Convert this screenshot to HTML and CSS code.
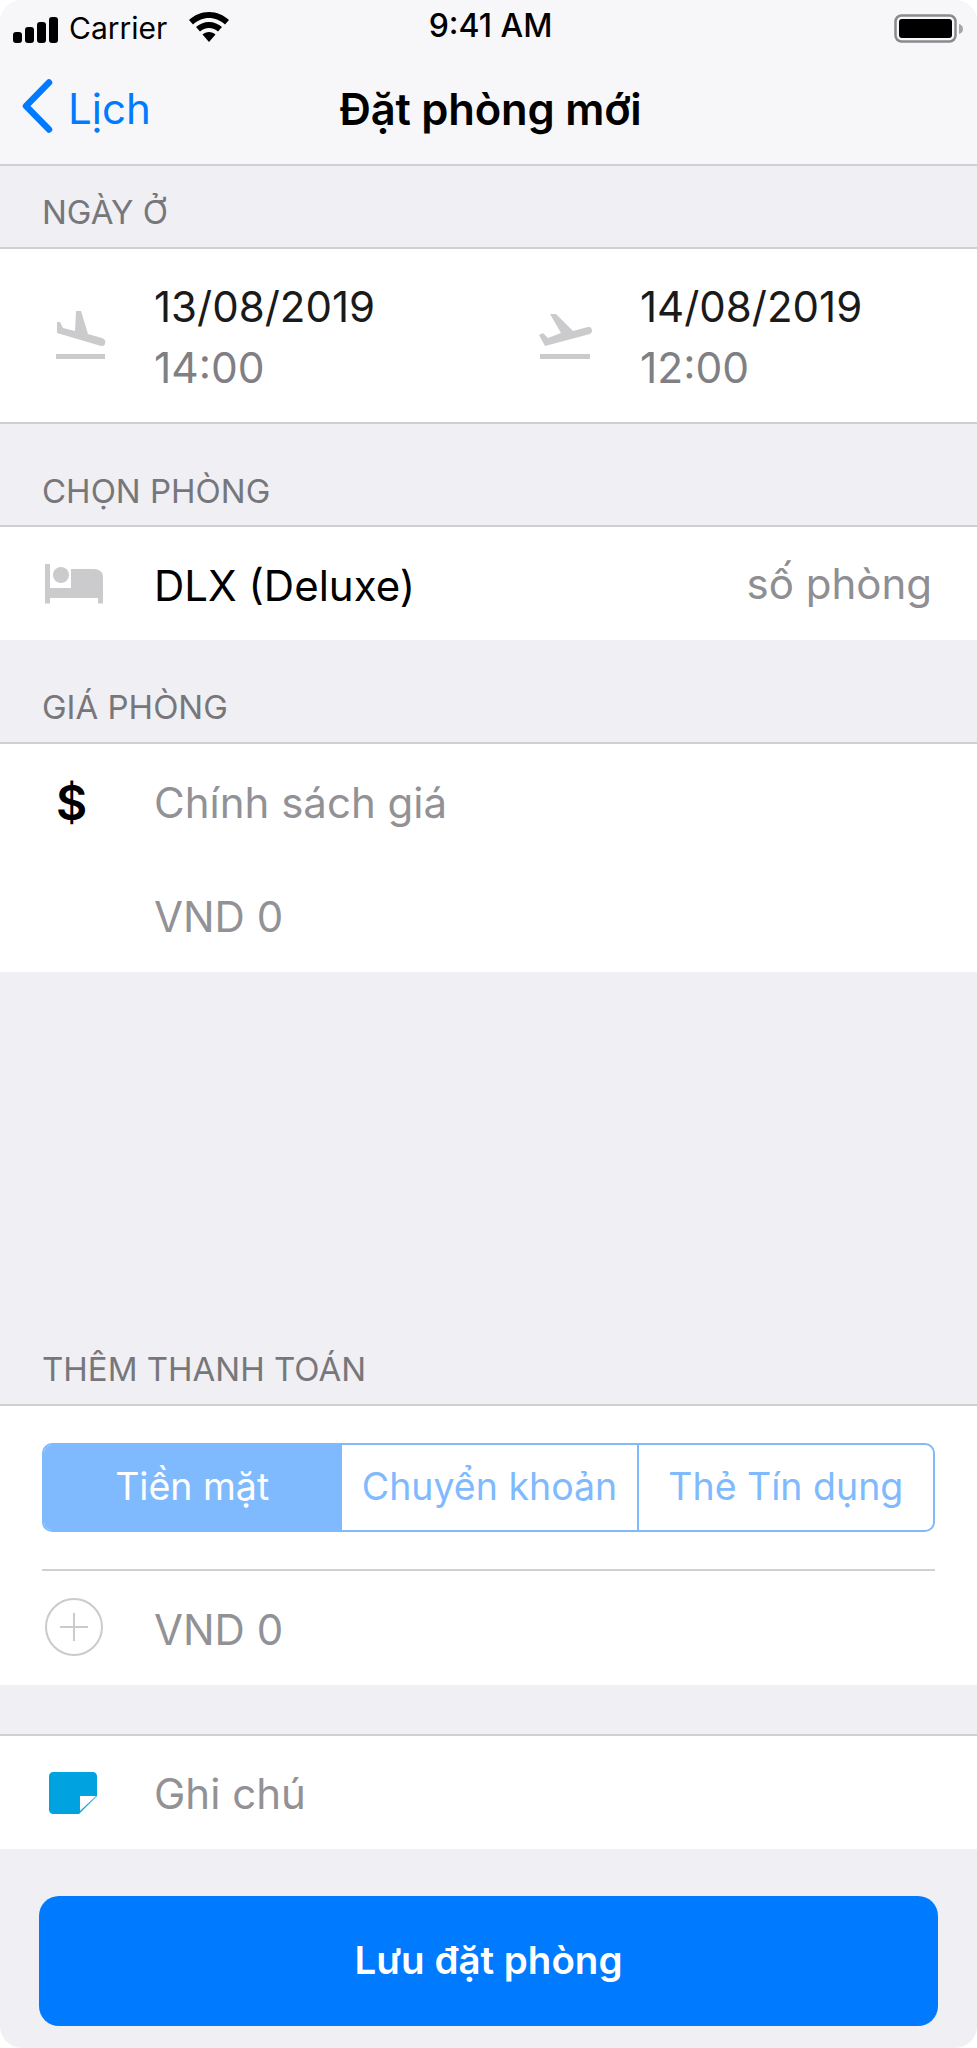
FILE: index.html
```html
<!DOCTYPE html>
<html lang="vi">
<head>
    <meta charset="UTF-8">
    <title>Đặt phòng mới</title>
    <link rel="stylesheet" href="styles.css">
</head>
<body>
<div class="screen">
    <header class="topbar">
        <div class="status">
            <div class="status-left">
                <svg class="signal" width="45" height="26" viewBox="0 0 45 26"><rect x="0" y="15" width="9" height="11" rx="3"/><rect x="12" y="10" width="9" height="16" rx="3"/><rect x="24" y="5" width="9" height="21" rx="3"/><rect x="36" y="0" width="9" height="26" rx="3"/></svg>
                <span class="carrier">Carrier</span>
                <svg class="wifi" width="40" height="30" viewBox="0 0 40 30"><path d="M20 0C12 0 5.500 3 0 8l4 4.500C8.500 8.500 14 6 20 6s11.500 2.500 16 6.500L40 8C34.500 3 28 0 20 0z"/><path d="M20 10c-5 0-9.500 2-13 5l4 4.500c2.500-2 5.500-3.500 9-3.500s6.500 1.500 9 3.500l4-4.500c-3.500-3-8-5-13-5z"/><path d="M20 20c-2.600 0-4.800 1-6.500 2.500L20 30l6.500-7.500C24.800 21 22.600 20 20 20z"/></svg>
            </div>
            <span class="clock">9:41 AM</span>
            <svg class="battery" width="70" height="30" viewBox="0 0 70 30"><rect x="1.500" y="1.500" width="60" height="26" rx="6" fill="none" stroke="#8a8a8e" stroke-width="2.500"/><rect x="5" y="5" width="53" height="19" rx="3"/><path d="M65 10c2.500 .5 4 2.500 4 5s-1.500 4.500-4 5z" fill="#a5a5a8"/></svg>
        </div>
        <nav class="nav">
            <a class="back">
                <svg width="34" height="56" viewBox="0 0 34 56"><path d="M29 4.500L6 28l23 23.500" fill="none" stroke="#007aff" stroke-width="6.500" stroke-linecap="round" stroke-linejoin="round"/></svg>
                <span>Lịch</span>
            </a>
            <h1>Đặt phòng mới</h1>
        </nav>
    </header>

    <div class="section-title title-first">NGÀY Ở</div>
    <section class="group dates">
        <div class="date-col">
            <svg class="icon" width="50" height="50" viewBox="0 0 50 50"><path fill="#cbcbcd" d="M1 11h3l3 6 12 3 1-20h5l7 23 14 4c3 1 4 3 3 6-1 2-2 2-4 2L1 22z"/><rect x="0" y="43" width="49" height="5" fill="#cbcbcd"/></svg>
            <div class="date-text"><div class="date">13/08/2019</div><div class="time">14:00</div></div>
        </div>
        <div class="date-col col-out">
            <svg class="icon" width="54" height="50" viewBox="0 0 54 50"><path fill="#cbcbcd" d="M11 3h6l17 17 15-4c3-.5 4 1.500 4 4 0 2-1.500 3-4 3.500L6 35 0 24l4-2 5 5 13-5z"/><rect x="1" y="43" width="50" height="5" fill="#cbcbcd"/></svg>
            <div class="date-text"><div class="date">14/08/2019</div><div class="time">12:00</div></div>
        </div>
    </section>

    <div class="section-title title-room">CHỌN PHÒNG</div>
    <section class="group row room">
        <svg class="icon" width="58" height="40" viewBox="0 0 58 40"><path fill="#cbcbcd" d="M0 0h5v24h53v15.500h-5V34H5v5.500H0z"/><circle cx="16" cy="11" r="8" fill="#cbcbcd"/><path fill="#cbcbcd" d="M26 5h23c5 0 9 3 9 8v11H26z"/></svg>
        <span class="value">DLX (Deluxe)</span>
        <span class="room-no">số phòng</span>
    </section>

    <div class="section-title title-price">GIÁ PHÒNG</div>
    <section class="group price">
        <div class="row price-row">
            <span class="dollar">$</span>
            <span class="hint">Chính sách giá</span>
        </div>
        <div class="row price-row">
            <span class="icon-gap"></span>
            <span class="hint hint-low">VND 0</span>
        </div>
    </section>

    <div class="section-title title-pay">THÊM THANH TOÁN</div>
    <section class="group pay">
        <div class="segments">
            <div class="segment active">Tiền mặt</div>
            <div class="segment">Chuyển khoản</div>
            <div class="segment">Thẻ Tín dụng</div>
        </div>
        <div class="pay-line"></div>
        <div class="row pay-row">
            <svg class="icon" width="60" height="60" viewBox="0 0 60 60"><circle cx="30" cy="30" r="28" fill="none" stroke="#cbcbcd" stroke-width="2"/><path d="M30 16v28M16 30h28" stroke="#cbcbcd" stroke-width="2"/></svg>
            <span class="hint hint-low">VND 0</span>
        </div>
    </section>

    <section class="group row note">
        <svg class="icon" width="48" height="42" viewBox="0 0 48 42"><path fill="#00a2e0" d="M4 0h40c2 0 4 2 4 4v20L30 42H4c-2 0-4-2-4-4V4c0-2 2-4 4-4z"/><path fill="#fff" d="M31 24h16L31 39z"/></svg>
        <span class="hint hint-low">Ghi chú</span>
    </section>

    <div class="save-wrap">
        <button class="save">Lưu đặt phòng</button>
    </div>
</div>
</body>
</html>
```
FILE: styles.css
```css
* {
    box-sizing: border-box;
}
html, body {
    margin: 0;
    padding: 0;
    background: #fff;
}
body {
    font-family: Inter, "Liberation Sans", sans-serif;
    color: #000;
}
.screen {
    width: 977px;
    height: 2048px;
    background: #efeff4;
    border-radius: 22px;
    overflow: hidden;
}

/* top bar */
.topbar {
    height: 166px;
    background: #f7f7f9;
    border-bottom: 2px solid #cfcfd2;
}
.status {
    height: 48px;
    padding: 10px 7px 0 13px;
    display: grid;
    grid-template-columns: 1fr auto 1fr;
    align-items: center;
}
.status-left {
    display: flex;
    align-items: center;
}
.carrier {
    font-size: 30px;
    margin-left: 11px;
    position: relative;
    top: -2px;
}
.wifi {
    margin-left: 22px;
    position: relative;
    top: -3px;
}
.clock {
    font-size: 32px;
    font-weight: 500;
    position: relative;
    top: -4px;
    left: -1px;
}
.battery {
    justify-self: end;
    margin-top: -2px;
    margin-right: 6px;
}
.nav {
    position: relative;
    height: 116px;
    display: flex;
    align-items: center;
    justify-content: center;
}
.nav h1 {
    margin: 0;
    font-size: 43.5px;
    font-weight: 600;
    letter-spacing: -0.2px;
    position: relative;
    left: 2px;
    top: 3px;
}
.back {
    position: absolute;
    left: 20px;
    top: 30px;
    display: flex;
    align-items: center;
    color: #007aff;
    font-size: 42px;
}
.back span {
    margin-left: 14px;
    position: relative;
    top: 2px;
}

/* section headers */
.section-title {
    padding-left: 42px;
    font-size: 33px;
    color: #77777b;
    display: flex;
    align-items: flex-end;
    border-bottom: 2px solid #cfcfd2;
    padding-bottom: 15px;
}
.title-first {
    height: 83px;
}
.title-room {
    height: 103px;
    padding-bottom: 14px;
}
.title-price {
    height: 104px;
}
.title-pay {
    height: 434px;
}

/* white groups */
.group {
    background: #fff;
}
.row {
    display: flex;
    align-items: center;
}
.dates {
    height: 175px;
    display: flex;
    border-bottom: 2px solid #cfcfd2;
}
.date-col {
    width: 487px;
    display: flex;
    align-items: center;
    padding-left: 56px;
}
.col-out {
    padding-left: 52px;
    width: 490px;
}
.date-text {
    margin-left: 48px;
    padding-top: 2px;
}
.col-out .date-text {
    margin-left: 47px;
}
.date {
    font-size: 42px;
    color: #1a1a1a;
}
.time {
    font-size: 42.500px;
    color: #808084;
    margin-top: 10px;
}
.icon {
    flex: none;
}
.room {
    height: 113px;
    padding: 0 45px;
}
.value {
    font-size: 42px;
    margin-left: 51px;
    position: relative;
    top: 2px;
}
.room-no {
    margin-left: auto;
    font-size: 42px;
    color: #8e8e93;
}
.hint {
    font-size: 42px;
    color: #929296;
}
.hint-low {
    position: relative;
    top: 1px;
}
.price {
    height: 228px;
    padding-top: 2px;
}
.price-row {
    height: 113px;
}
.dollar {
    width: 154px;
    padding-left: 56px;
    font-size: 48px;
    font-weight: 600;
}
.icon-gap {
    width: 154px;
}
.pay {
    height: 279px;
    padding: 37px 42px 0;
}
.segments {
    display: grid;
    grid-template-columns: 1fr 1fr 1fr;
    height: 89px;
    border: 2px solid #7fbaff;
    border-radius: 10px;
    overflow: hidden;
}
.segment {
    display: flex;
    align-items: center;
    justify-content: center;
    font-size: 37.500px;
    color: #7fbaff;
    border-left: 2px solid #7fbaff;
    padding-bottom: 3px;
}
.segment.active {
    background: #7fbaff;
    color: #fff;
    border-left: 0;
}
.pay-line {
    height: 2px;
    background: #d1d1d4;
    margin-top: 37px;
}
.pay-row {
    height: 112px;
    padding: 0 0 0 2px;
}
.pay-row .hint {
    margin-left: 50px;
    top: 2px;
}
.note {
    margin-top: 49px;
    height: 115px;
    border-top: 2px solid #cfcfd2;
    padding-left: 49px;
}
.note .hint {
    margin-left: 57px;
}
.save-wrap {
    padding: 47px 39px 0;
}
.save {
    display: block;
    width: 100%;
    height: 130px;
    padding-bottom: 4px;
    background: #007aff;
    color: #fff;
    border: 0;
    border-radius: 20px;
    font-family: inherit;
    font-size: 38.500px;
    font-weight: 600;
}
```
